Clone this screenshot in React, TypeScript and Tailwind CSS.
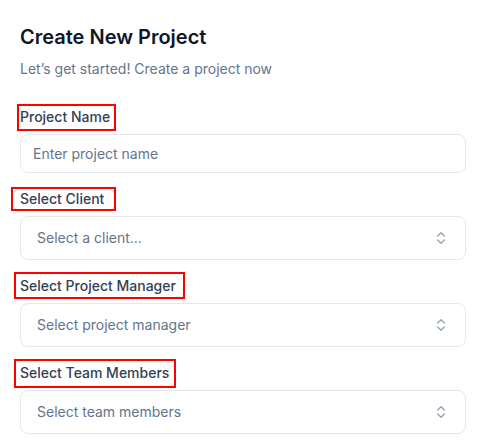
import { ChevronsUpDown } from 'lucide-react';

type Marker = { left: string; right: string; top: string; bottom: string };

type Field = {
  label: string;
  placeholder: string;
  kind: 'input' | 'select';
  marker: Marker;
};

const fields: Field[] = [
  {
    label: 'Project Name',
    placeholder: 'Enter project name',
    kind: 'input',
    marker: { left: '-3px', right: '-6px', top: '-3px', bottom: '-4px' },
  },
  {
    label: 'Select Client',
    placeholder: 'Select a client...',
    kind: 'select',
    marker: { left: '-9px', right: '-12px', top: '-2px', bottom: '-2px' },
  },
  {
    label: 'Select Project Manager',
    placeholder: 'Select project manager',
    kind: 'select',
    marker: { left: '-6px', right: '-9px', top: '-4px', bottom: '-3px' },
  },
  {
    label: 'Select Team Members',
    placeholder: 'Select team members',
    kind: 'select',
    marker: { left: '-6px', right: '-7px', top: '-4px', bottom: '-5px' },
  },
];

function App() {
  return (
    <div className="min-h-screen bg-white pl-5 pr-[19px] pt-[23px] font-['Inter','Liberation_Sans',sans-serif]">
      <h1 className="text-xl font-semibold leading-7 text-[#0f172a]">Create New Project</h1>
      <p className="mt-2 text-sm leading-5 text-[#64748b]">Let’s get started! Create a project now</p>

      <div className="mt-[28px] flex flex-col gap-4">
        {fields.map((field) => (
          <div key={field.label} className="flex flex-col gap-[7px]">
            <div className="flex">
              <label className="relative block text-sm font-medium leading-5 text-[#334155]">
                {field.label}
                {/* annotation outline */}
                <span
                  className="pointer-events-none absolute border-2 border-[#ff0000]"
                  style={field.marker}
                />
              </label>
            </div>
            {field.kind === 'input' ? (
              <input
                className="h-[39px] w-full rounded-lg border border-[#e2e8f0] bg-white px-3 text-sm text-[#334155] placeholder:text-[#64748b] focus:outline-none"
                placeholder={field.placeholder}
                type="text"
              />
            ) : (
              <div className="flex h-11 w-full items-center justify-between rounded-lg border border-[#e2e8f0] bg-white px-4">
                <span className="text-sm text-[#64748b]">{field.placeholder}</span>
                <ChevronsUpDown className="h-4 w-4 text-[#94a3b8]" strokeWidth={2} />
              </div>
            )}
          </div>
        ))}
      </div>
    </div>
  );
}

export default App;
